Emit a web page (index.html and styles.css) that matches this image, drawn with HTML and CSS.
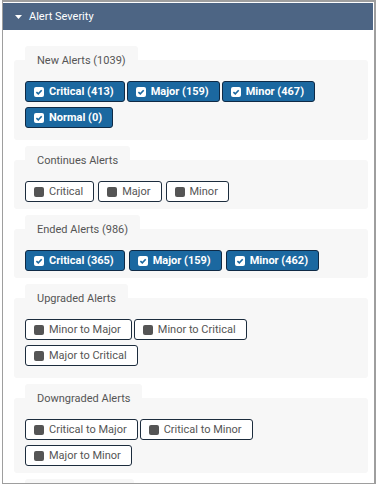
FILE: index.html
```html
<!DOCTYPE html>
<html lang="en">
<head>
<meta charset="utf-8">
<title>Alert Severity</title>
<link rel="stylesheet" href="styles.css">
</head>
<body>
<div class="box">
  <div class="box-header">
    <svg class="caret" width="7" height="4" viewBox="0 0 7 4"><path d="M0 0H7L3.5 4Z" fill="#fff"/></svg>
    <span>Alert Severity</span>
  </div>
  <div class="box-content">

    <section class="group">
      <div class="group-tab">New Alerts (1039)</div>
      <div class="group-body group-body-loose">
        <div class="chips">
          <button class="chip chip-on"><svg class="ck" viewBox="0 0 10 10"><rect width="10" height="10" rx="2" fill="#fff"/><path d="M2.4 5.1L4.3 6.9L7.7 3.3" fill="none" stroke="#1b68a0" stroke-width="1.6"/></svg>Critical (413)</button>
          <button class="chip chip-on"><svg class="ck" viewBox="0 0 10 10"><rect width="10" height="10" rx="2" fill="#fff"/><path d="M2.4 5.1L4.3 6.9L7.7 3.3" fill="none" stroke="#1b68a0" stroke-width="1.6"/></svg>Major (159)</button>
          <button class="chip chip-on"><svg class="ck" viewBox="0 0 10 10"><rect width="10" height="10" rx="2" fill="#fff"/><path d="M2.4 5.1L4.3 6.9L7.7 3.3" fill="none" stroke="#1b68a0" stroke-width="1.6"/></svg>Minor (467)</button>
          <button class="chip chip-on"><svg class="ck" viewBox="0 0 10 10"><rect width="10" height="10" rx="2" fill="#fff"/><path d="M2.4 5.1L4.3 6.9L7.7 3.3" fill="none" stroke="#1b68a0" stroke-width="1.6"/></svg>Normal (0)</button>
        </div>
      </div>
    </section>

    <section class="group">
      <div class="group-tab">Continues Alerts</div>
      <div class="group-body">
        <div class="chips chips-spaced">
          <button class="chip"><span class="box-off"></span>Critical</button>
          <button class="chip"><span class="box-off"></span>Major</button>
          <button class="chip"><span class="box-off"></span>Minor</button>
        </div>
      </div>
    </section>

    <section class="group">
      <div class="group-tab">Ended Alerts (986)</div>
      <div class="group-body">
        <div class="chips chips-spaced">
          <button class="chip chip-on"><svg class="ck" viewBox="0 0 10 10"><rect width="10" height="10" rx="2" fill="#fff"/><path d="M2.4 5.1L4.3 6.9L7.7 3.3" fill="none" stroke="#1b68a0" stroke-width="1.6"/></svg>Critical (365)</button>
          <button class="chip chip-on"><svg class="ck" viewBox="0 0 10 10"><rect width="10" height="10" rx="2" fill="#fff"/><path d="M2.4 5.1L4.3 6.9L7.7 3.3" fill="none" stroke="#1b68a0" stroke-width="1.6"/></svg>Major (159)</button>
          <button class="chip chip-on"><svg class="ck" viewBox="0 0 10 10"><rect width="10" height="10" rx="2" fill="#fff"/><path d="M2.4 5.1L4.3 6.9L7.7 3.3" fill="none" stroke="#1b68a0" stroke-width="1.6"/></svg>Minor (462)</button>
        </div>
      </div>
    </section>

    <section class="group">
      <div class="group-tab">Upgraded Alerts</div>
      <div class="group-body group-body-loose">
        <div class="chips">
          <button class="chip"><span class="box-off"></span>Minor to Major</button>
          <button class="chip"><span class="box-off"></span>Minor to Critical</button>
          <button class="chip"><span class="box-off"></span>Major to Critical</button>
        </div>
      </div>
    </section>

    <section class="group">
      <div class="group-tab">Downgraded Alerts</div>
      <div class="group-body">
        <div class="chips">
          <button class="chip"><span class="box-off"></span>Critical to Major</button>
          <button class="chip"><span class="box-off"></span>Critical to Minor</button>
          <button class="chip"><span class="box-off"></span>Major to Minor</button>
        </div>
      </div>
    </section>

    <section class="group">
      <div class="group-tab group-tab-empty"></div>
    </section>

  </div>
</div>
</body>
</html>
```

FILE: styles.css
```css
* { box-sizing: border-box; }

html, body {
  margin: 0;
  padding: 0;
  background: #fff;
  font-family: Roboto, "Liberation Sans", Arial, sans-serif;
}

.box {
  margin: 0 0 1px 2px;
  height: 484px;
  overflow: hidden;
  border-style: solid;
  border-color: #9e9e9e;
  border-width: 2px 2px 1px 1px;
  padding: 1px 1px 0 0;
  background: #fff;
}

.box-header {
  height: 27px;
  background: #4d6584;
  color: #fff;
  display: flex;
  align-items: center;
  padding-left: 12px;
  font-size: 11px;
}

.caret {
  display: block;
  margin-right: 7px;
}

.box-content {
  padding: 16px 5px 0 11px;
}

.group {
  display: flex;
  flex-direction: column;
  align-items: flex-start;
  margin-bottom: 6px;
}

.group-tab {
  position: relative;
  z-index: 1;
  margin-left: 11px;
  padding: 8px 12px 0;
  line-height: 14px;
  font-size: 11px;
  color: #555;
  background: #f7f7f7;
  border-radius: 3px 3px 0 0;
  margin-bottom: -8px;
  white-space: nowrap;
}

.group-tab-empty {
  width: 109px;
  height: 22px;
}

.group-body {
  align-self: stretch;
  background: #f7f7f7;
  border-radius: 3px;
  padding: 21px 20px 7px 11px;
}

.group-body-loose {
  padding-bottom: 12px;
}

.chips {
  display: flex;
  flex-wrap: wrap;
  gap: 5px 2px;
}

.chips-spaced {
  gap: 5px 4px;
}

.chip {
  display: inline-flex;
  align-items: center;
  height: 21px;
  margin: 0;
  padding: 0 10px 0 8px;
  border: 1px solid #1c2c3d;
  border-radius: 3px;
  background: #fff;
  color: #555;
  font-family: inherit;
  font-size: 11px;
  line-height: 19px;
  white-space: nowrap;
  cursor: pointer;
}

.chip-on {
  background: #1b68a0;
  border-color: #0f2a45;
  color: #fff;
  font-weight: 700;
}

.ck {
  width: 10px;
  height: 10px;
  margin-right: 5px;
  flex: none;
}

.box-off {
  width: 10px;
  height: 10px;
  border-radius: 2px;
  background: #555;
  margin-right: 5px;
  flex: none;
}
```
